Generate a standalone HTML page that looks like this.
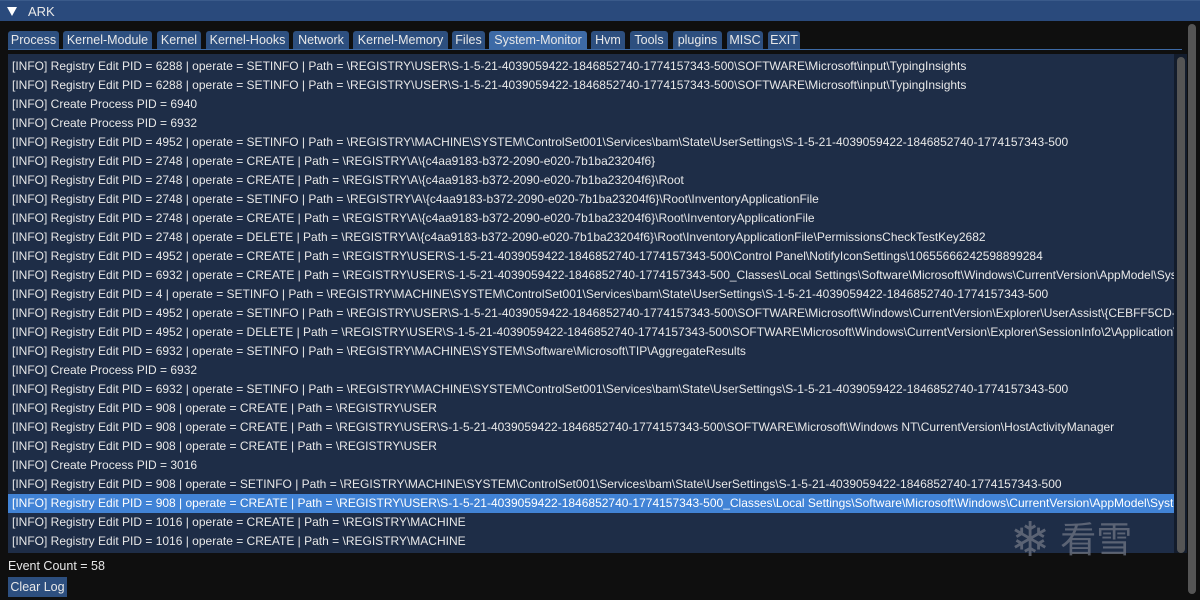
<!DOCTYPE html><html><head><style>
body{margin:0;width:1200px;height:600px;background:#0f0f0f;overflow:hidden;font-family:"Liberation Sans","Noto Sans CJK SC",sans-serif;font-size:12px;color:#e8e8e8;position:relative}
.title{position:absolute;left:0;top:0;width:1200px;height:21px;background:#2a4a7c;border-top:1px solid #3a5a8a;box-sizing:border-box}
.title span{position:absolute;left:28px;top:3px;font-size:13px}
.tri{position:absolute;left:7px;top:6px;width:0;height:0;border-left:5px solid transparent;border-right:5px solid transparent;border-top:9px solid #fff}
.tab{position:absolute;top:31px;height:18px;background:#2d4f7f;border-radius:3px 3px 0 0;text-align:center;line-height:19px;font-size:12.5px}
.tab.sel{background:#3d6aa6}
.line{position:absolute;left:8px;top:49px;width:1174px;height:1px;background:#3d6aa6}
.panel{position:absolute;left:8px;top:54px;width:1166px;height:499px;background:#1e2d47;overflow:hidden}
.row{height:19px;line-height:19px;padding-left:4px;white-space:nowrap}
.row.sel{background:#4183d6;color:#fff}
.vs1{position:absolute;left:1174px;top:54px;width:13px;height:499px;background:#131c2c}
.th1{position:absolute;left:1177px;top:57px;width:8px;height:496px;background:#555;border-radius:4px}
.th2{position:absolute;left:1188px;top:24px;width:8px;height:570px;background:#555;border-radius:4px}
.btn{position:absolute;left:8px;top:577px;width:59px;height:20px;background:#2d4f7f;line-height:21px;text-align:center;font-size:12.5px}
.wm{position:absolute;left:1010px;top:518px;color:#707684;opacity:.75;font-size:36px;line-height:44px;white-space:nowrap}
</style></head><body>
<div class="title"><div class="tri"></div><span>ARK</span></div>
<div class="tab" style="left:8px;width:51px">Process</div>
<div class="tab" style="left:63px;width:89px">Kernel-Module</div>
<div class="tab" style="left:157px;width:44px">Kernel</div>
<div class="tab" style="left:206px;width:83px">Kernel-Hooks</div>
<div class="tab" style="left:293px;width:56px">Network</div>
<div class="tab" style="left:353px;width:95px">Kernel-Memory</div>
<div class="tab" style="left:452px;width:33px">Files</div>
<div class="tab sel" style="left:489px;width:98px">System-Monitor</div>
<div class="tab" style="left:591px;width:34px">Hvm</div>
<div class="tab" style="left:630px;width:38px">Tools</div>
<div class="tab" style="left:673px;width:49px">plugins</div>
<div class="tab" style="left:727px;width:36px">MISC</div>
<div class="tab" style="left:768px;width:32px">EXIT</div>
<div class="line"></div>
<div class="panel"><div style="height:3px"></div>
<div class="row">[INFO] Registry Edit PID = 6288 | operate = SETINFO | Path = \REGISTRY\USER\S-1-5-21-4039059422-1846852740-1774157343-500\SOFTWARE\Microsoft\input\TypingInsights</div>
<div class="row">[INFO] Registry Edit PID = 6288 | operate = SETINFO | Path = \REGISTRY\USER\S-1-5-21-4039059422-1846852740-1774157343-500\SOFTWARE\Microsoft\input\TypingInsights</div>
<div class="row">[INFO] Create Process PID = 6940</div>
<div class="row">[INFO] Create Process PID = 6932</div>
<div class="row">[INFO] Registry Edit PID = 4952 | operate = SETINFO | Path = \REGISTRY\MACHINE\SYSTEM\ControlSet001\Services\bam\State\UserSettings\S-1-5-21-4039059422-1846852740-1774157343-500</div>
<div class="row">[INFO] Registry Edit PID = 2748 | operate = CREATE | Path = \REGISTRY\A\{c4aa9183-b372-2090-e020-7b1ba23204f6}</div>
<div class="row">[INFO] Registry Edit PID = 2748 | operate = CREATE | Path = \REGISTRY\A\{c4aa9183-b372-2090-e020-7b1ba23204f6}\Root</div>
<div class="row">[INFO] Registry Edit PID = 2748 | operate = SETINFO | Path = \REGISTRY\A\{c4aa9183-b372-2090-e020-7b1ba23204f6}\Root\InventoryApplicationFile</div>
<div class="row">[INFO] Registry Edit PID = 2748 | operate = CREATE | Path = \REGISTRY\A\{c4aa9183-b372-2090-e020-7b1ba23204f6}\Root\InventoryApplicationFile</div>
<div class="row">[INFO] Registry Edit PID = 2748 | operate = DELETE | Path = \REGISTRY\A\{c4aa9183-b372-2090-e020-7b1ba23204f6}\Root\InventoryApplicationFile\PermissionsCheckTestKey2682</div>
<div class="row">[INFO] Registry Edit PID = 4952 | operate = CREATE | Path = \REGISTRY\USER\S-1-5-21-4039059422-1846852740-1774157343-500\Control Panel\NotifyIconSettings\10655666242598899284</div>
<div class="row">[INFO] Registry Edit PID = 6932 | operate = CREATE | Path = \REGISTRY\USER\S-1-5-21-4039059422-1846852740-1774157343-500_Classes\Local Settings\Software\Microsoft\Windows\CurrentVersion\AppModel\SystemAppData</div>
<div class="row">[INFO] Registry Edit PID = 4 | operate = SETINFO | Path = \REGISTRY\MACHINE\SYSTEM\ControlSet001\Services\bam\State\UserSettings\S-1-5-21-4039059422-1846852740-1774157343-500</div>
<div class="row">[INFO] Registry Edit PID = 4952 | operate = SETINFO | Path = \REGISTRY\USER\S-1-5-21-4039059422-1846852740-1774157343-500\SOFTWARE\Microsoft\Windows\CurrentVersion\Explorer\UserAssist\{CEBFF5CD-ACE2}</div>
<div class="row">[INFO] Registry Edit PID = 4952 | operate = DELETE | Path = \REGISTRY\USER\S-1-5-21-4039059422-1846852740-1774157343-500\SOFTWARE\Microsoft\Windows\CurrentVersion\Explorer\SessionInfo\2\ApplicationViewManagement</div>
<div class="row">[INFO] Registry Edit PID = 6932 | operate = SETINFO | Path = \REGISTRY\MACHINE\SYSTEM\Software\Microsoft\TIP\AggregateResults</div>
<div class="row">[INFO] Create Process PID = 6932</div>
<div class="row">[INFO] Registry Edit PID = 6932 | operate = SETINFO | Path = \REGISTRY\MACHINE\SYSTEM\ControlSet001\Services\bam\State\UserSettings\S-1-5-21-4039059422-1846852740-1774157343-500</div>
<div class="row">[INFO] Registry Edit PID = 908 | operate = CREATE | Path = \REGISTRY\USER</div>
<div class="row">[INFO] Registry Edit PID = 908 | operate = CREATE | Path = \REGISTRY\USER\S-1-5-21-4039059422-1846852740-1774157343-500\SOFTWARE\Microsoft\Windows NT\CurrentVersion\HostActivityManager</div>
<div class="row">[INFO] Registry Edit PID = 908 | operate = CREATE | Path = \REGISTRY\USER</div>
<div class="row">[INFO] Create Process PID = 3016</div>
<div class="row">[INFO] Registry Edit PID = 908 | operate = SETINFO | Path = \REGISTRY\MACHINE\SYSTEM\ControlSet001\Services\bam\State\UserSettings\S-1-5-21-4039059422-1846852740-1774157343-500</div>
<div class="row sel">[INFO] Registry Edit PID = 908 | operate = CREATE | Path = \REGISTRY\USER\S-1-5-21-4039059422-1846852740-1774157343-500_Classes\Local Settings\Software\Microsoft\Windows\CurrentVersion\AppModel\SystemAppData</div>
<div class="row">[INFO] Registry Edit PID = 1016 | operate = CREATE | Path = \REGISTRY\MACHINE</div>
<div class="row">[INFO] Registry Edit PID = 1016 | operate = CREATE | Path = \REGISTRY\MACHINE</div>
</div>
<div class="vs1"></div><div class="th1"></div><div class="th2"></div>
<div style="position:absolute;left:8px;top:559px;font-size:12.5px">Event Count = 58</div>
<div class="btn">Clear Log</div>
<div class="wm"><span style="font-size:48px;vertical-align:-4px">❄</span> 看雪</div>
</body></html>
